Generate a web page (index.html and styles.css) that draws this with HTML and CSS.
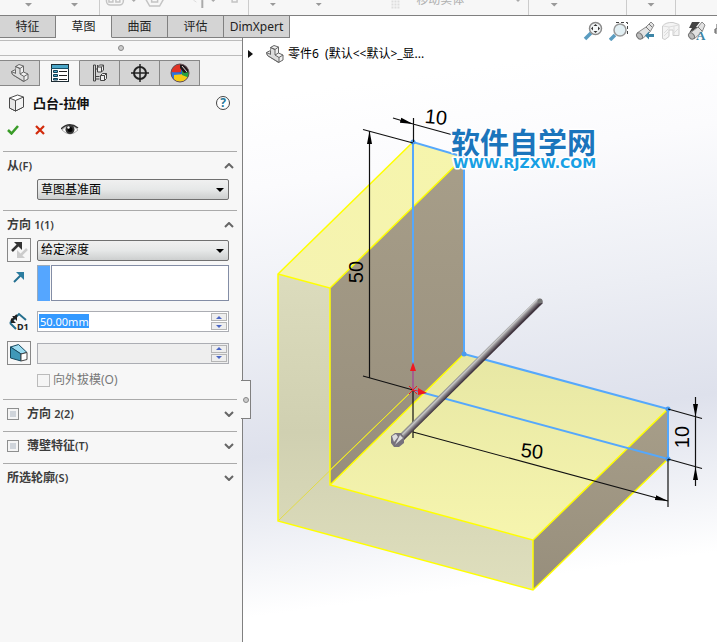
FILE: index.html
```html
<!DOCTYPE html>
<html lang="zh-CN">
<head>
<meta charset="utf-8">
<title>凸台-拉伸</title>
<link rel="stylesheet" href="styles.css">
</head>
<body>
<header class="ribbon">
  <svg class="w99" viewBox="0 0 99 15"><path d="M25 3h7l-3.500 3.500zM71 3h7l-3.500 3.500z" fill="#999"/></svg>
  <svg class="w149" viewBox="99 0 149 15">
    <g fill="none" stroke="#c4c4c4" stroke-width="1.500"><rect x="105.500" y="-10" width="17" height="15" rx="4"/><path d="M108 2v-3h4v3zM115 2v-3h4v3zM145 -1l4 7h10l4-7M151 -1h6v3h-6zM232 -2v4h5v-4"/></g>
    <path d="M131 0h4l-2 2zM211 0h4l-2 2z" fill="#aaa"/><path d="M193 0l3 2" stroke="#ddd"/><path d="M202 0v8" stroke="#aaa" stroke-width="2"/>
  </svg>
  <svg class="w280" viewBox="248 0 280 15">
    <path d="M269 3h6l-3 3zM315 3h6l-3 3z" fill="#999"/><path d="M516 0h4l-2 2z" fill="#aaa"/>
    <path d="M391 1.500h8M391 4.500h8M391 7.500h8" stroke="#ddd" stroke-width="2" stroke-dasharray="2 1"/>
    <text x="416" y="4" class="ghost">移动实体</text>
  </svg>
  <svg class="w98" viewBox="528 0 98 15"><path d="M550 3h7l-3.500 3.500z" fill="#999"/></svg>
  <svg class="w49" viewBox="626 0 49 15"><path d="M647 3h7l-3.500 3.500z" fill="#999"/></svg>
</header>
<main class="workspace">
  <aside class="panel">
    <nav class="tabs">
      <button>特征</button><button class="on">草图</button><button>曲面</button><button>评估</button><button class="wide">DimXpert</button>
    </nav>
    <div class="grip"><i class="dot"></i></div>
    <nav class="managers">
      <button aria-label="设计树"><svg class="part" viewBox="0 0 18 18"><use href="#part"/></svg></button>
      <button class="on" aria-label="属性"><svg width="18" height="18" viewBox="0 0 18 18"><rect x=".5" y=".5" width="17" height="17" fill="#fff" stroke="#1c2b33"/><path d="M1 1h16v3H1z" fill="#4aa6c8"/><path d="M0 4.500h18" stroke="#174f68"/><path d="M2.500 6.500h4v2h-4zM2.500 10.500h4v2h-4zM2.500 14.500h4v1.500h-4z" fill="#4aa6c8" stroke="#143f53"/><path d="M8 7.500h8M8 11.500h8M8 15.500h8" stroke="#222"/></svg></button>
      <button aria-label="配置"><svg width="18" height="18" viewBox="0 0 18 18" fill="none" stroke="#444"><path d="M2.500 1v16h2V1zM4.500 5h2v-4M4.500 12.500h4M4.500 15h4" /><path d="M6.500 3l2-2h4v5l-2 2h-4zM6.500 3h4v5M10.500 3l2-2M9.500 11.500l2-2h4v5l-2 2h-4zM9.500 11.500h4v5M13.500 11.500l2-2" fill="#eee"/></svg></button>
      <button aria-label="尺寸"><svg width="18" height="18" viewBox="0 0 18 18" fill="none" stroke="#222" stroke-width="2"><circle cx="9" cy="9" r="6"/><path d="M9 0v18M0 9h18" stroke-width="1.500"/></svg></button>
      <button aria-label="外观"><svg width="20" height="20" viewBox="0 0 20 20"><defs><clipPath id="ball"><circle cx="10" cy="10" r="9"/></clipPath></defs><g clip-path="url(#ball)"><path d="M0 0h20v20H0z" fill="#2567ce"/><path d="M3 0h8v9L1 10z" fill="#e13324"/><path d="M0 9l10 1-4 9H0z" fill="#2e75dd"/><path d="M4 12l10-1 6 2-7 8-9-2z" fill="#f6cb16"/><path d="M12 8h8v7l-8-3z" fill="#28a143"/><path d="M10 1l7 2 2 6-5 1-4-5z" fill="#221619"/><path d="M12 3l5 6" stroke="#ddd"/></g><circle cx="10" cy="10" r="9" fill="none" stroke="#675050"/></svg></button>
      <span class="rest"></span>
    </nav>
    <div class="title">
      <svg width="18" height="18" viewBox="0 0 18 18" stroke="#4a4a4a" stroke-linejoin="round"><path d="M1.500 4l8-3 6 2v10l-8 4-6-3z" fill="#fff"/><path d="M1.500 4l6 2.500v10.500l-6-3z" fill="#e6e6e6"/><path d="M7.500 6.500l8-3.500v10l-8 4z" fill="#f3f3f3"/></svg>
      <h1>凸台-拉伸</h1>
      <button class="help" aria-label="帮助">?</button>
    </div>
    <div class="actions">
      <button aria-label="确定"><svg width="12" height="10" viewBox="0 0 12 10"><path d="M1 5l3.500 3.500L11 1" fill="none" stroke="#3a9c28" stroke-width="2.500"/></svg></button>
      <button aria-label="取消"><svg width="10" height="10" viewBox="0 0 10 10"><path d="M1 1l8 8M9 1L1 9" stroke="#d22a0b" stroke-width="2.200"/></svg></button>
      <button aria-label="预览"><svg width="18" height="14" viewBox="0 0 18 14"><path d="M1 7Q9-2 17 7 9 15 1 7z" fill="#fff" stroke="#aaa"/><path d="M0 6Q8-2 17 5" fill="none" stroke="#333" stroke-width="1.500"/><circle cx="9" cy="6.500" r="4.500" fill="#333"/><circle cx="9" cy="6.500" r="2.500" fill="#000"/><circle cx="7.500" cy="4.500" r="1.200" fill="#fff"/></svg></button>
    </div>

    <section>
      <h2><span>从<small>(F)</small></span><svg class="chev" viewBox="0 0 10 6"><path d="M1 5l4-4 4 4"/></svg></h2>
      <div class="row from"><span></span><div class="drop"><select aria-label="从"><option>草图基准面</option></select></div></div>
    </section>
    <section class="first">
      <h2><span>方向 <small>1(1)</small></span><svg class="chev" viewBox="0 0 10 6"><path d="M1 5l4-4 4 4"/></svg></h2>
      <div class="row depth">
        <button class="tool" aria-label="反向"><svg width="20" height="20" viewBox="0 0 20 20"><path d="M3 11l7-7" stroke="#333" stroke-width="2.500"/><path d="M5 2h8v8z" fill="#333"/><path d="M18 9l-7 7" stroke="#ccc" stroke-width="2.500"/><path d="M8 10v8h8z" fill="#ccc"/></svg></button>
        <div class="drop"><select aria-label="终止条件"><option>给定深度</option></select></div>
      </div>
      <div class="row direction">
        <svg class="arrow" width="12" height="12" viewBox="0 0 12 12"><path d="M1 11l7-7" stroke="#236f91" stroke-width="2"/><path d="M3 1h8v8z" fill="#2c7da0"/></svg>
        <div class="pick"><i></i><input type="text" aria-label="拉伸方向"></div>
      </div>
      <div class="row">
        <svg width="22" height="20" viewBox="0 0 22 20"><path d="M3 11L12 2l7 6M3 11l6 6" fill="none" stroke="#256f8e" stroke-width="2"/><path d="M4 9l6-6" stroke="#222" stroke-width="2"/><path d="M5 4h5v5zM4 6v5h5z" fill="#222"/><text x="10" y="18" class="d1">D1</text></svg>
        <div class="spin"><input class="chosen" type="text" value="50.00mm" aria-label="深度"><div class="steps"><button aria-label="增加"><i class="up"></i></button><button aria-label="减少"><i class="down"></i></button></div></div>
      </div>
      <div class="row draft">
        <button class="tool" aria-label="拔模"><svg width="20" height="20" viewBox="0 0 20 20" stroke="#174a60" stroke-linejoin="round"><path d="M1.500 4l8-2.500 8.500 8-6 1.500z" fill="#9cdcf1"/><path d="M1.500 4l10.500 7v7l-10.500-3z" fill="#3f98b8"/><path d="M12 11l6-1.500v7L12 18z" fill="#fff" stroke="#444"/></svg></button>
        <div class="spin off"><input type="text" aria-label="拔模角度" disabled><div class="steps"><button aria-label="增加角度"><i class="up"></i></button><button aria-label="减少角度"><i class="down"></i></button></div></div>
      </div>
      <div class="row"><span></span><label class="outward"><input type="checkbox" disabled>向外拔模(O)</label></div>
    </section>
    <section class="closed"><h2><label><input type="checkbox">方向 <small>2(2)</small></label><svg class="chev" viewBox="0 0 10 6"><path d="M1 1l4 4 4-4"/></svg></h2></section>
    <section class="closed"><h2><label><input type="checkbox">薄壁特征<small>(T)</small></label><svg class="chev" viewBox="0 0 10 6"><path d="M1 1l4 4 4-4"/></svg></h2></section>
    <section class="closed"><h2><span>所选轮廓<small>(S)</small></span><svg class="chev" viewBox="0 0 10 6"><path d="M1 1l4 4 4-4"/></svg></h2></section>
    <button class="fold" aria-label="折叠"><i class="dot"></i></button>
  </aside>

  <div class="view">
    <svg class="model" viewBox="243 16 474 626" preserveAspectRatio="xMinYMin meet">
      <defs>
        <linearGradient id="top" x1="0" y1="1" x2="1" y2="0"><stop offset="0" stop-color="#f5f3b0"/><stop offset="1" stop-color="#f6f5ac"/></linearGradient>
        <linearGradient id="floor" x1="0" y1="0" x2="0" y2="1"><stop offset="0" stop-color="#e7e7a4"/><stop offset="1" stop-color="#f6f5ae"/></linearGradient>
        <linearGradient id="front" x1="0" y1="0" x2="0" y2="1"><stop offset="0" stop-color="#dcdcbd"/><stop offset=".5" stop-color="#d0d0b1"/><stop offset="1" stop-color="#dfdfbd"/></linearGradient>
        <linearGradient id="wall" x1="0" y1="0" x2="0" y2="1"><stop offset="0" stop-color="#a79e89"/><stop offset="1" stop-color="#978e7c"/></linearGradient>
        <linearGradient id="rod" gradientUnits="userSpaceOnUse" x1="466" y1="368" x2="471" y2="373"><stop offset="0" stop-color="#777"/><stop offset=".3" stop-color="#c5c5c5"/><stop offset=".6" stop-color="#858085"/><stop offset="1" stop-color="#413640"/></linearGradient>
        <marker id="tip" markerUnits="userSpaceOnUse" markerWidth="14" markerHeight="6" refX="13" refY="3" orient="auto-start-reverse"><path d="M0 .500L13 3 0 5.500z"/></marker>
      </defs>
      <path d="M278 274L330 288V485L533 540V590L278 521z" fill="url(#front)"/>
      <path d="M278 274L413 142 464 157 330 288z" fill="url(#top)"/>
      <path d="M330 288L464 157V354L330 485z" fill="url(#wall)"/>
      <path d="M330 485L464 354 668 409 533 540z" fill="url(#floor)"/>
      <path d="M533 540L668 409V459L533 590z" fill="url(#wall)"/>
      <path d="M278 521L413 390" stroke="#e2dc45" fill="none"/>
      <path d="M330 470L413 390" stroke="#f4ee18" fill="none"/>
      <g fill="none" stroke="#ff0" stroke-width="1.500"><path d="M413 142L278 274V521L533 590 668 459M278 274L330 288V485L533 540V590M330 288L464 157M330 485L464 354M533 540L668 409"/></g>
      <path d="M413 390V142L464 157V354L668 409V459z" fill="none" stroke="#55a8fc" stroke-width="2"/>
      <g fill="#4a9cf0"><circle cx="413" cy="142" r="2.500"/><circle cx="464" cy="354" r="2.500"/><circle cx="668" cy="409" r="2.500"/><circle cx="668" cy="459" r="2.500"/></g>
      <g fill="none" stroke="#111" stroke-width="1.200">
        <path d="M363 129.500L413 143M363 376L413 390M413.500 118V142M413 390V438M668 409L702 418.500M668 459L702 468.500M668 459V507M413 124L464 138M695.500 417V467"/>
        <path d="M369.500 131V378M413 432L668 501" marker-start="url(#tip)" marker-end="url(#tip)"/>
        <path d="M393 118L413 124" marker-end="url(#tip)"/><path d="M695.500 397V417" marker-end="url(#tip)"/><path d="M695.500 486V467" marker-end="url(#tip)"/>
      </g>
      <g class="dim">
        <text transform="translate(436 117) rotate(6)" y="7">10</text>
        <text transform="translate(356 272) rotate(-90)" y="7">50</text>
        <text transform="translate(532 451) rotate(6)" y="7">50</text>
        <text transform="translate(682 437) rotate(-90)" y="7">10</text>
      </g>
      <path d="M395.500 438.500L537.500 298.500Q543 298 542.500 303.500L400.500 443.500z" fill="url(#rod)"/>
      <circle cx="540" cy="301" r="2.500" fill="#777"/>
      <path d="M391 436l4-3h6l3 4v6l-5 4h-5l-3-4z" fill="#77727c"/><path d="M392 436l4-2 2 3-4 5zM400 435l3 3-6 5-2 2z" fill="#ddd"/>
      <g fill="#f01820" stroke="#f01820"><path d="M413 390V370M413 390L420 391.500M409 386l8 8M417 386l-8 8"/><path d="M413 362l-3 9h6zM427 393l-9-5v7z" stroke="none"/></g>
      <g class="mark">
        <text x="451" y="154" class="name">软件自学网</text>
        <text x="453" y="168" class="site">WWW.RJZXW.COM</text>
      </g>
    </svg>
    <div class="overlay">
      <div class="tree"><i class="caret"></i><svg class="part" viewBox="0 0 18 18"><use href="#part"/></svg><span>零件6&nbsp; (默认&lt;&lt;默认&gt;_显...</span></div>
      <div class="heads">
        <button aria-label="整屏显示"><svg viewBox="0 0 20 20"><path d="M2 18l6-6" stroke="#5a9cc0" stroke-width="3.500"/><circle cx="12.500" cy="7.500" r="6" fill="#f4f7f8" stroke="#8a8a8a" stroke-width="1.500"/><path d="M12.500 3l2 2h-4zM12.500 12l2-2h-4zM8 7.500l2-2v4zM17 7.500l-2-2v4z" fill="#333"/></svg></button>
        <button aria-label="局部放大"><svg viewBox="0 0 20 20"><path d="M7 1.500h11.500V13" fill="none" stroke="#444" stroke-dasharray="3 2"/><path d="M1 19l5-5" stroke="#5a9cc0" stroke-width="3.500"/><circle cx="11" cy="9" r="6" fill="#e2eff3" stroke="#999" stroke-width="1.500"/></svg></button>
        <button aria-label="上一视图"><svg viewBox="0 0 20 20" stroke-linejoin="round"><path d="M2 12L11 6l5-5 3 3-4 7-8 7z" fill="#e2e2e2" stroke="#8a8a8a"/><path d="M11 6l4 4M14 3l3 3" stroke="#777"/><ellipse cx="4.500" cy="15" rx="2.500" ry="3.500" transform="rotate(-40 4.500 15)" fill="#bbb" stroke="#777"/><path d="M10 14.500l4-4v2.500h5v3h-5v2.500z" fill="#3d85a6"/></svg></button>
        <button aria-label="剖面视图"><svg viewBox="0 0 20 20" stroke="#ccc" stroke-linejoin="round"><path d="M1.500 5Q5 1 12 1.500l6 2v11h-6V9H8v6.500l-4 3-2.500-1z" fill="#f4f4f4"/><path d="M2 5l6 1 5-1 5-1M8 6v3M13 5v9M3 12l4-4M3 15l4-4M13 12l4-4" fill="none" stroke="#ddd"/></svg></button>
        <button aria-label="视图定向"><svg viewBox="0 0 20 20" stroke-linejoin="round"><path d="M5 1h8L9 6h3L2 12l3-5H2z" fill="#444"/><path d="M2 13L11 6l4-5 3 3-3 7-8 7z" fill="#e2e2e2" stroke="#8a8a8a"/><path d="M11 6l4 4" stroke="#777"/><ellipse cx="4.500" cy="15" rx="2.500" ry="3.500" transform="rotate(-40 4.500 15)" fill="#bbb" stroke="#777"/><text x="9" y="19" class="ay">A</text></svg></button>
        <button aria-label="显示样式"><svg viewBox="0 0 20 20" fill="none" stroke="#555"><path d="M6 3H4v5H2v4h3v5h2M2 10h8"/></svg></button>
      </div>
    </div>
  </div>
</main>
<svg class="defs" width="0" height="0"><defs><g id="part" stroke="#666" stroke-linejoin="round"><path d="M.5 7.500L4.500 5.500V2.500L8 .500 12.500 2V8L17 10V15L12.500 17.500 1.500 10.500z" fill="#f0f0f0"/><path d="M4.500 2.500L9 4.500V10l4 2.500v5L1.500 10.500l-1-3L5 9.500" fill="#ddd"/><path d="M4.500 2.500L9 4.500 12.500 2M4.500 5.500V9M9 10l3.500-2M13 12.500L17 10" fill="none"/></g></defs></svg>
</body>
</html>
```
FILE: styles.css
```css
* { box-sizing: border-box; }
body {
  margin: 0;
  height: 100vh;
  display: flex;
  flex-direction: column;
  overflow: hidden;
  font: 12px/16px "Noto Sans", "Noto Sans CJK SC", sans-serif;
  color: #222;
  background: #f7f7f7;
}
button, input, select { font: inherit; color: inherit; margin: 0; }
button { padding: 0; border: 0; background: none; display: flex; align-items: center; justify-content: center; }

.ribbon { display: flex; flex: none; height: 16px; border-bottom: 1px solid #808080; overflow: hidden; }
.ribbon svg { flex: none; height: 15px; border-right: 1px solid #ccc; }
.w99 { width: 100px; }
.w149 { width: 149px; }
.w280 { width: 280px; }
.w98 { width: 98px; }
.w49 { width: 49px; }
.ghost { font-size: 12px; fill: #b0b0b0; }

.workspace { display: flex; flex: 1; min-height: 0; }
.panel { position: relative; z-index: 1; flex: none; width: 243px; border-right: 1px solid #808080; background: #f7f7f7; }

.tabs { display: flex; width: max-content; height: 22px; margin-bottom: 2px; }
.tabs button { width: 56px; border: solid #808080; border-width: 0 1px 1px 0; background: #d4d4d4; }
.tabs .on { background: #f7f7f7; border-bottom-color: #f7f7f7; }
.tabs .wide { width: 66px; }

.grip { height: 16px; border: solid #bbb; border-width: 1px 0; display: flex; align-items: center; justify-content: center; }
.dot { width: 6px; height: 6px; border: 1px solid #888; border-radius: 50%; background: #ccc; }

.managers { display: flex; height: 26px; margin-top: 4px; }
.managers button { width: 40px; background: #d4d4d4; border: 1px solid #888; border-left: 0; }
.managers .on { background: #f7f7f7; border-top-color: #bbb; border-bottom-color: #f7f7f7; }
.rest { flex: 1; border-bottom: 1px solid #aaa; }
.part { width: 18px; height: 18px; flex: none; }

.title { display: flex; align-items: center; height: 34px; padding: 0 12px 0 8px; gap: 7px; }
h1 { flex: 1; margin: 0; font-size: 13px; font-weight: 700; color: #111; }
.help { width: 14px; height: 14px; border: 1px solid #444; border-radius: 50%; background: #fff; color: #247799; font-weight: 700; }
.actions { display: flex; align-items: center; height: 20px; padding-left: 7px; gap: 16px; margin-bottom: 11px; }

section { margin: 0 5px 0 3px; padding: 6px 8px 10px 4px; border-top: 1px solid #aaa; }
section.first { padding-bottom: 11px; }
section.closed { padding-bottom: 9px; }
h2 { display: flex; justify-content: space-between; align-items: center; height: 16px; margin: 0 -5px 5px 0; font-size: 12px; font-weight: 700; color: #3c3c3c; }
.closed h2 { margin-bottom: 0; }
h2 small { font-size: 11px; font-weight: 600; }
.chev { width: 10px; height: 6px; fill: none; stroke: #666; stroke-width: 2; }

.row { display: grid; grid-template-columns: 24px minmax(0, 1fr); column-gap: 6px; align-items: center; margin-bottom: 10px; }
.row:last-child { margin-bottom: 0; }
.row.depth { margin-bottom: 3px; }
.row.draft { margin-bottom: 7px; margin-top: -1px; }
.tool { width: 24px; height: 24px; border: 1px solid #888; }
.drop { position: relative; }
.drop select {
  display: block;
  width: 100%;
  height: 21px;
  padding: 0 3px;
  appearance: none;
  border: 1px solid #707070;
  border-radius: 2px;
  background: linear-gradient(#f0f0f0, #e6e8e8 50%, #cdcfcf);
  color: #000;
}
.drop::after { content: ""; position: absolute; right: 5px; top: 9px; border: 4px solid transparent; border-top-color: #000; border-bottom: 0; }
.direction .arrow { align-self: start; margin: 6px 0 0 6px; }
.pick { display: flex; gap: 1px; height: 36px; }
.pick i { flex: none; width: 13px; background: #55a6ff; border: 1px solid #9ab; border-width: 1px 0 0 1px; }
.pick input { flex: 1; min-width: 0; border: 1px solid #838da5; background: #fff; }
.spin { display: flex; height: 21px; border: 1px solid #abadb3; background: #fff; padding: 1px; }
.spin input { flex: 1; min-width: 0; border: 0; padding: 0 1px; font-size: 11px; line-height: 13px; background: #fff; }
.spin .chosen { color: #fff; background: linear-gradient(#3399ff, #3399ff) 0 1px / 50px 14px no-repeat #fff; }
.spin.off, .spin.off input { background: #eee; }
.steps { display: flex; flex-direction: column; width: 16px; gap: 1px; }
.steps button { flex: 1; border: 1px solid #b5b5b5; background: #eee; }
.steps i { border: 3px solid transparent; }
.steps .up { border-top: 0; border-bottom-color: #4c67c4; }
.steps .down { border-bottom: 0; border-top-color: #4c67c4; }
.d1 { font: 700 9px "Noto Sans", sans-serif; fill: #222; }

input[type="checkbox"] { appearance: none; width: 12px; height: 12px; border: 1px solid #8e8f8f; background: #cfd4da; box-shadow: inset 0 0 0 2px #f5f5f5; }
label { display: flex; align-items: center; }
h2 label { white-space: pre; }
h2 label input[type="checkbox"] { margin-right: 8px; }
.outward { gap: 3px; color: #777; }
.outward input[type="checkbox"] { width: 13px; height: 13px; background: #f5f5f5; border-color: #bbb; }
.fold { position: absolute; left: 241px; top: 364px; width: 10px; height: 39px; border: 1px solid #808080; border-left: 0; background: #f7f7f7; }

.view { flex: 1; min-width: 0; display: grid; grid-template: minmax(0, 1fr) / minmax(0, 1fr); background: linear-gradient(172deg, #fff 12%, #fbfbfd 25%, #eceef4 46%, #dee1ec 64%, #eceef4 74%, #fff 87%); }
.model, .overlay { grid-area: 1 / 1; }
.model { width: 100%; height: 100%; }
.overlay { display: flex; justify-content: space-between; align-items: flex-start; overflow: hidden; }
.tree { display: flex; align-items: center; height: 18px; margin: 29px 0 0 5px; gap: 4px; color: #000; white-space: nowrap; }
.caret { border: 4px solid transparent; border-left: 5px solid #111; border-right: 0; margin-right: 9px; }
.heads { display: flex; gap: 6px; margin: 5px -16px 0 0; }
.heads svg { width: 20px; height: 20px; }
.ay { font: 700 13px "Liberation Serif", serif; fill: #3d85a6; }
.dim { font: 20px "Liberation Sans Narrow", "Liberation Sans", sans-serif; text-anchor: middle; fill: #000; }
.mark { paint-order: stroke; stroke: #fff; stroke-width: 3px; stroke-linejoin: round; }
.name { font: 700 29px "Noto Sans CJK SC", sans-serif; fill: #1b75bc; }
.site { font: 700 14px "DejaVu Sans", sans-serif; fill: #18a0e4; }
.defs { position: absolute; }
```
